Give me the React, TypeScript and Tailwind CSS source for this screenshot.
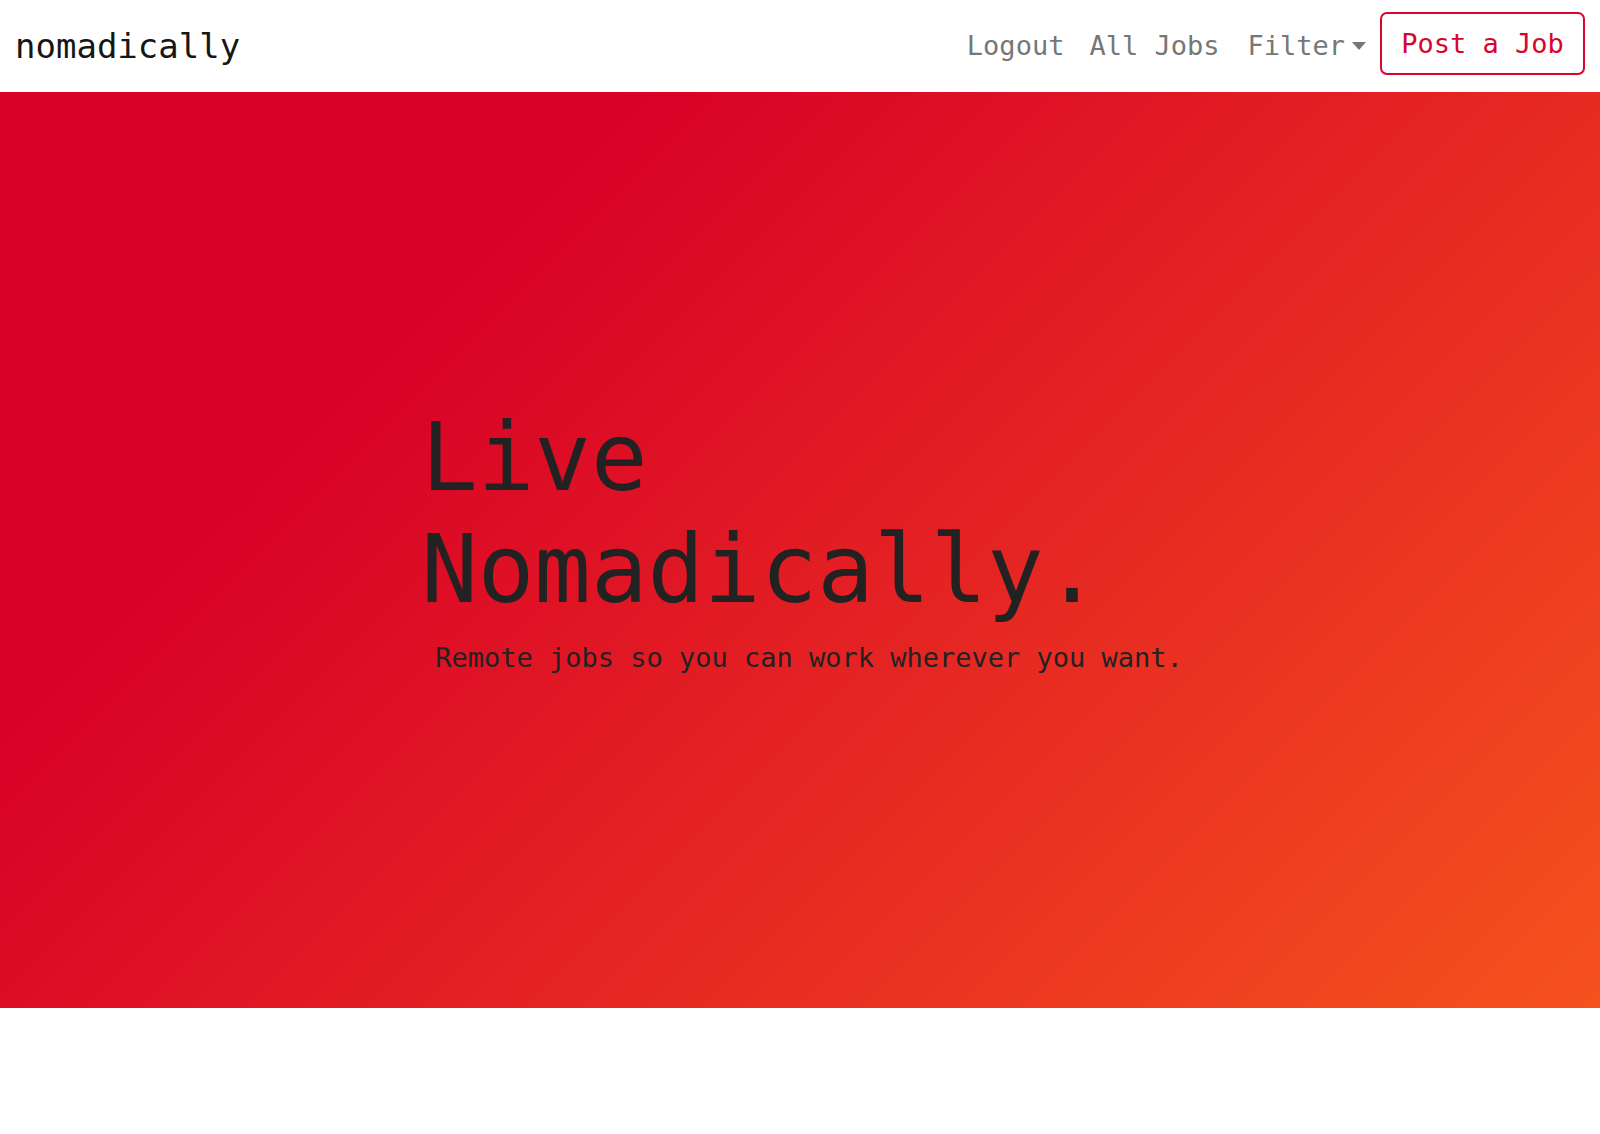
const mono = "font-['DejaVu_Sans_Mono','Liberation_Mono',monospace]";

const NavLink = ({ label, caret, tight }: { label: string; caret?: boolean; tight?: boolean }) => (
  <a
    href="#"
    className={`flex items-center pl-[14px] text-[27px] leading-[40px] text-[#777777] ${tight ? "pr-[11px]" : "pr-[14px]"}`}
  >
    {label}
    {caret && (
      <span className="ml-[7px] h-0 w-0 border-x-[7px] border-t-[8px] border-x-transparent border-t-[#777777]" />
    )}
  </a>
);

export default function App() {
  return (
    <div className={`${mono} min-h-[1134px] bg-white`}>
      <nav className="flex h-[92px] items-center justify-between pl-[15px] pr-[15px]">
        <a href="#" className="text-[34px] leading-[51px] text-[#161616]">
          nomadically
        </a>
        <div className="flex items-center">
          <NavLink label="Logout" tight />
          <NavLink label="All Jobs" />
          <NavLink label="Filter" caret />
          <button className="mb-[5px] h-[63px] w-[205px] rounded-[7px] border-2 border-[#d6062c] text-[27px] leading-[40px] text-[#d6062c]">
            Post a Job
          </button>
        </div>
      </nav>

      <section className="flex h-[916px] items-center justify-center bg-[linear-gradient(135deg,#d80027_25%,#f5521d_100%)] pb-[20px]">
        <div className="text-[#222222]">
          <h1 className="ml-[4px] text-[94px] leading-[112px] font-normal">
            <span className="block">Live</span>
            <span className="block">Nomadically.</span>
          </h1>
          <p className="mt-[12px] pl-[18px] text-[27px] leading-[40px]">
            Remote jobs so you can work wherever you want.
          </p>
        </div>
      </section>
    </div>
  );
}
